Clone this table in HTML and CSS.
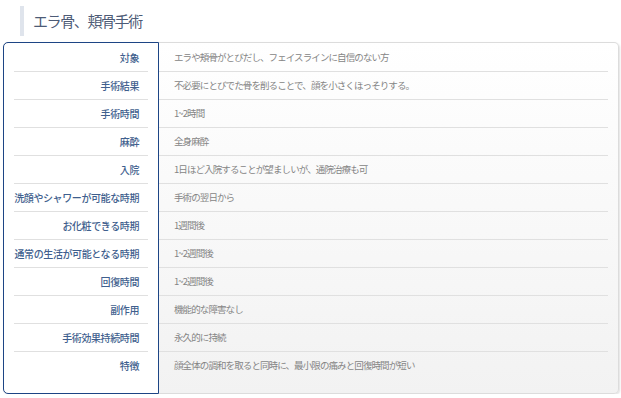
FILE: index.html
```html
<!DOCTYPE html>
<html lang="ja">
  <head>
    <meta charset="UTF-8" />
    <meta name="viewport" content="width=device-width, initial-scale=1.0" />
    <title>エラ骨、頬骨手術</title>
    <link rel="stylesheet" href="styles.css">
  </head>
  <body>
    <h2 class="page-title">エラ骨、頬骨手術</h2>
    <div class="spec-box">
      <div class="spec-labels">
        <div class="spec-row">対象</div>
        <div class="spec-row">手術結果</div>
        <div class="spec-row">手術時間</div>
        <div class="spec-row">麻酔</div>
        <div class="spec-row">入院</div>
        <div class="spec-row">洗顔やシャワーが可能な時期</div>
        <div class="spec-row">お化粧できる時期</div>
        <div class="spec-row">通常の生活が可能となる時期</div>
        <div class="spec-row">回復時間</div>
        <div class="spec-row">副作用</div>
        <div class="spec-row">手術効果持続時間</div>
        <div class="spec-row">特徴</div>
      </div>
      <div class="spec-values">
        <div class="spec-row">エラや頬骨がとびだし、フェイスラインに自信のない方</div>
        <div class="spec-row">不必要にとびでた骨を削ることで、顔を小さくほっそりする。</div>
        <div class="spec-row">1~2時間</div>
        <div class="spec-row">全身麻酔</div>
        <div class="spec-row">1日ほど入院することが望ましいが、通院治療も可</div>
        <div class="spec-row">手術の翌日から</div>
        <div class="spec-row">1週間後</div>
        <div class="spec-row">1~2週間後</div>
        <div class="spec-row">1~2週間後</div>
        <div class="spec-row">機能的な障害なし</div>
        <div class="spec-row">永久的に持続</div>
        <div class="spec-row">顔全体の調和を取ると同時に、最小限の痛みと回復時間が短い</div>
      </div>
    </div>
  </body>
</html>
```

FILE: styles.css
```css
body {
  margin: 0;
  font-family: "Noto Sans CJK JP", "Noto Sans", sans-serif;
  background: #fff;
}
.page-title {
  margin: 6px 0 6px 20px;
  height: 30px;
  padding-left: 9px;
  border-left: 4px solid;
  border-image: linear-gradient(to right, #dfe4ec, #f8f9fb) 1;
  font-size: 15px;
  font-weight: normal;
  line-height: 30px;
  color: #4d5b76;
  letter-spacing: -1.4px;
}
.spec-box {
  display: flex;
  margin-left: 3px;
  width: 615px;
  height: 350px;
  border: 1px solid #dcdcdc;
  border-left: none;
  border-radius: 5px;
  background: linear-gradient(#ffffff, #f2f2f2);
  box-shadow: 1px 1px 2px rgba(0, 0, 0, 0.12);
}
.spec-labels {
  width: 134px;
  margin: -1px 0;
  padding: 1px 10px 0 10px;
  border: 1px solid #1d4585;
  border-radius: 5px 0 0 5px;
  background: #fff;
}
.spec-values {
  flex: 1;
  padding: 1px 10px 0 0;
}
.spec-row {
  height: 27px;
  line-height: 27px;
  border-bottom: 1px solid #e0e0e0;
  white-space: nowrap;
}
.spec-row:last-child {
  border-bottom: none;
}
.spec-labels .spec-row {
  text-align: right;
  padding-right: 9px;
  font-size: 10px;
  color: #3f5f8e;
  font-weight: 500;
  letter-spacing: -0.4px;
}
.spec-values .spec-row {
  padding-left: 15px;
  font-size: 9.5px;
  color: #858585;
  letter-spacing: -0.9px;
}
```
